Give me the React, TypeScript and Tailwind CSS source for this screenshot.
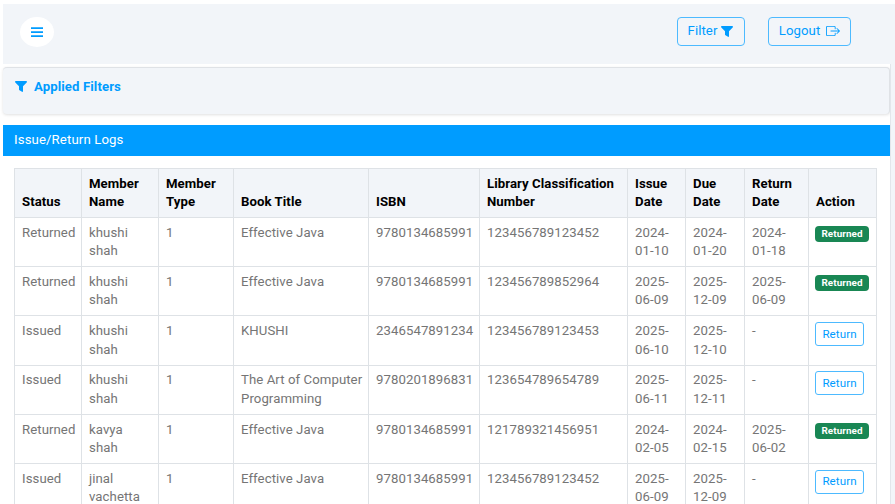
type Log = {
  status: string;
  name: string;
  type: string;
  title: string;
  isbn: string;
  lcn: string;
  issue: string;
  due: string;
  ret: string;
};

const logs: Log[] = [
  { status: 'Returned', name: 'khushi shah', type: '1', title: 'Effective Java', isbn: '9780134685991', lcn: '123456789123452', issue: '2024-01-10', due: '2024-01-20', ret: '2024-01-18' },
  { status: 'Returned', name: 'khushi shah', type: '1', title: 'Effective Java', isbn: '9780134685991', lcn: '123456789852964', issue: '2025-06-09', due: '2025-12-09', ret: '2025-06-09' },
  { status: 'Issued', name: 'khushi shah', type: '1', title: 'KHUSHI', isbn: '2346547891234', lcn: '123456789123453', issue: '2025-06-10', due: '2025-12-10', ret: '-' },
  { status: 'Issued', name: 'khushi shah', type: '1', title: 'The Art of Computer Programming', isbn: '9780201896831', lcn: '123654789654789', issue: '2025-06-11', due: '2025-12-11', ret: '-' },
  { status: 'Returned', name: 'kavya shah', type: '1', title: 'Effective Java', isbn: '9780134685991', lcn: '121789321456951', issue: '2024-02-05', due: '2024-02-15', ret: '2025-06-02' },
  { status: 'Issued', name: 'jinal vachetta', type: '1', title: 'Effective Java', isbn: '9780134685991', lcn: '123456789123452', issue: '2025-06-09', due: '2025-12-09', ret: '-' },
];

const columns = ['Status', 'Member Name', 'Member Type', 'Book Title', 'ISBN', 'Library Classification Number', 'Issue Date', 'Due Date', 'Return Date', 'Action'];

const grid = 'grid grid-cols-[67px_77px_75px_135px_111px_148px_58px_59px_64px_68px] w-[863px] border-l border-[#dee2e6]';

function Funnel() {
  return (
    <svg className="h-[11px] w-[12px] shrink-0" viewBox="0 0 12 11" fill="currentColor">
      <path d="M.7 0h10.600c.6 0 .9.8.4 1.500L8 5.300v5c0 .6-.5.8-1 .5L4.500 9.200C4.200 9 4 8.700 4 8.400V5.300L.3 1.500C-.2.800.1 0 .7 0z" />
    </svg>
  );
}

function Bars() {
  return (
    <svg className="h-[11px] w-[12px]" viewBox="0 0 12 11" fill="none" stroke="currentColor">
      <path strokeWidth="1.800" d="M0 1.200h12M0 5.200h12M0 9.200h12" />
    </svg>
  );
}

function Exit() {
  return (
    <svg className="mb-px h-[10px] w-[14px]" viewBox="0 2 16 12" preserveAspectRatio="none" fill="currentColor">
      <path d="M10 12.500a.5.5 0 0 1-.5.5h-8a.5.5 0 0 1-.5-.5v-9a.5.5 0 0 1 .5-.5h8a.5.5 0 0 1 .5.5v2a.5.5 0 0 0 1 0v-2A1.500 1.500 0 0 0 9.500 2h-8A1.500 1.500 0 0 0 0 3.500v9A1.500 1.500 0 0 0 1.500 14h8a1.500 1.500 0 0 0 1.500-1.500v-2a.5.5 0 0 0-1 0z" />
      <path d="M15.854 8.354a.5.5 0 0 0 0-.708l-3-3a.5.5 0 0 0-.708.708L14.293 7.500H5.500a.5.5 0 0 0 0 1h8.793l-2.147 2.146a.5.5 0 0 0 .708.708z" />
    </svg>
  );
}

export default function App() {
  return (
    <div className="flex h-[504px] w-[895px] overflow-hidden bg-white pl-[3px] pt-1 font-[Roboto,'Liberation_Sans',sans-serif] text-[13.2px] leading-[18.25px] tracking-[0.07px] text-[#757575]">
      <div className="flex w-[887px] shrink-0 flex-col">
        <header className="-mr-[5px] flex h-[60px] shrink-0 items-start bg-[#f2f5f9] pt-[13px] text-[#009cff]">
          <button className="ml-[17px] flex h-[30px] w-[34px] items-center justify-center rounded-[50%] bg-white">
            <Bars />
          </button>
          <button className="ml-auto mr-[23px] flex h-[29px] w-[68px] items-center justify-center gap-[4px] rounded-[4px] border border-[#4dbaff] pr-px">
            <span>Filter</span>
            <Funnel />
          </button>
          <button className="mr-[44px] flex h-[29px] w-[83px] items-center justify-center gap-1.5 rounded-[4px] border border-[#4dbaff]">
            <span>Logout</span>
            <Exit />
          </button>
        </header>
        <section className="mt-[3px] flex h-[47px] shrink-0 items-start gap-[7px] rounded-[4px] border-t border-r border-[#dfe2e6] bg-[#f2f5f9] pl-3 pt-2.5 font-bold text-[#009cff] shadow-[0_1px_3px_rgba(0,0,0,0.12)]">
          <div className="pt-[3px]"><Funnel /></div>
          <h2 className="tracking-[0.08px]">Applied Filters</h2>
        </section>
        <main className="mt-[11px] flex grow flex-col">
          <div className="h-[31px] shrink-0 bg-[#009cff] pl-[11px] pt-[6px] tracking-[0.12px] text-white">Issue/Return Logs</div>
          <div className="ml-[11px] mt-3">
            <div className={`${grid} h-[50px] border-y bg-[#f2f5f9] font-bold tracking-[0.06px] text-black`}>
              {columns.map((c) => (
                <div key={c} className="flex items-end border-r border-[#dee2e6] pb-[5.500px] pl-[7px]">{c}</div>
              ))}
            </div>
            {logs.map((l, i) => (
              <div key={i} className={`${grid} h-[49.200px] border-b`}>
                {[l.status, l.name, l.type, l.title, l.isbn, l.lcn, l.issue, l.due, l.ret].map((v, j) => (
                  <div key={j} className="border-r border-[#dee2e6] pl-[7px] pr-[4px] pt-[5.900px]">{v}</div>
                ))}
                <div className="flex items-start border-r border-[#dee2e6] pl-[6px]">
                  {l.status === 'Returned' ? (
                    <span className="mt-2 flex h-[16px] w-[54px] items-center justify-center rounded-[4px] bg-[#198754] text-[9.900px] font-bold text-white">Returned</span>
                  ) : (
                    <button className="mt-[5.600px] flex h-[24px] w-[49px] items-center justify-center rounded-[3px] border border-[#4dbaff] text-[11.600px] text-[#009cff]">Return</button>
                  )}
                </div>
              </div>
            ))}
          </div>
        </main>
      </div>
      <div className="mt-[60px] grow border-l border-[#e2e6eb] bg-[#f2f5f9]" />
    </div>
  );
}
